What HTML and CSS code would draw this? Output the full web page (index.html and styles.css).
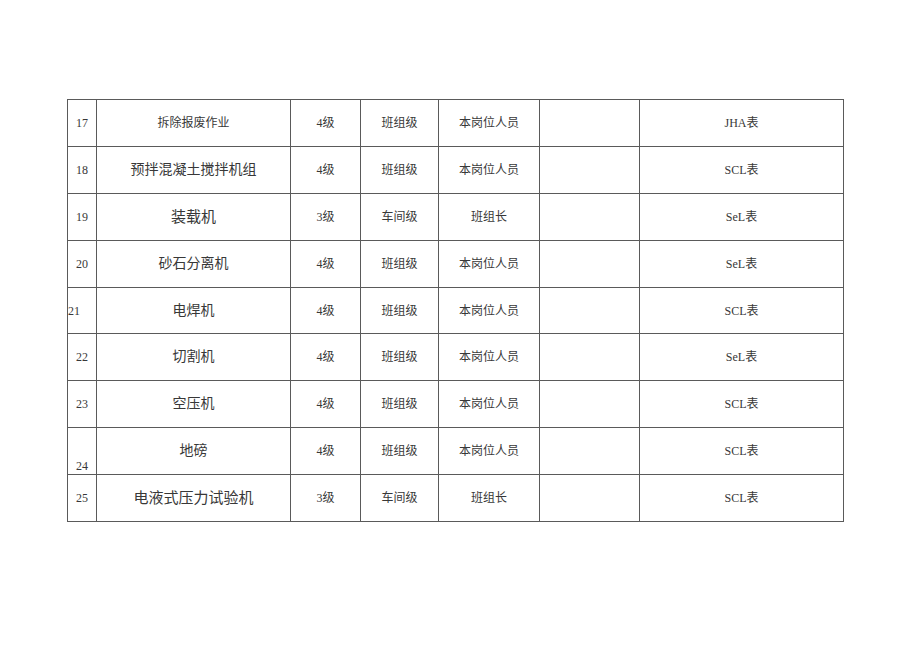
FILE: index.html
```html
<!DOCTYPE html>
<html lang="zh-CN">
<head>
<meta charset="utf-8">
<link rel="stylesheet" href="styles.css">
</head>
<body>
<table class="grid">
  <colgroup>
    <col class="c1"><col class="c2"><col class="c3"><col class="c4"><col class="c5"><col class="c6"><col class="c7">
  </colgroup>
  <tbody>
    <tr><td>17</td><td class="sm">拆除报废作业</td><td>4级</td><td>班组级</td><td>本岗位人员</td><td></td><td>JHA表</td></tr>
    <tr><td>18</td><td class="lg">预拌混凝土搅拌机组</td><td>4级</td><td>班组级</td><td>本岗位人员</td><td></td><td>SCL表</td></tr>
    <tr><td>19</td><td class="xl">装载机</td><td>3级</td><td>车间级</td><td>班组长</td><td></td><td>SeL表</td></tr>
    <tr><td>20</td><td class="md">砂石分离机</td><td>4级</td><td>班组级</td><td>本岗位人员</td><td></td><td>SeL表</td></tr>
    <tr class="short"><td class="left">21</td><td class="lg">电焊机</td><td>4级</td><td>班组级</td><td>本岗位人员</td><td></td><td>SCL表</td></tr>
    <tr><td>22</td><td class="lg">切割机</td><td>4级</td><td>班组级</td><td>本岗位人员</td><td></td><td>SeL表</td></tr>
    <tr><td>23</td><td class="lg">空压机</td><td>4级</td><td>班组级</td><td>本岗位人员</td><td></td><td>SCL表</td></tr>
    <tr><td class="bottom">24</td><td class="md">地磅</td><td>4级</td><td>班组级</td><td>本岗位人员</td><td></td><td>SCL表</td></tr>
    <tr><td>25</td><td class="xl">电液式压力试验机</td><td>3级</td><td>车间级</td><td>班组长</td><td></td><td>SCL表</td></tr>
  </tbody>
</table>
</body>
</html>
```
FILE: styles.css
```css
html, body {
  margin: 0;
  padding: 0;
  background: #ffffff;
}

body {
  font-family: "Liberation Serif", "Noto Sans CJK SC", serif;
  color: #383838;
}

.grid {
  border-collapse: collapse;
  table-layout: fixed;
  width: 776px;
  margin: 99px 0 0 67px;
}

.c1 { width: 29px; }
.c2 { width: 194px; }
.c3 { width: 70px; }
.c4 { width: 78px; }
.c5 { width: 101px; }
.c6 { width: 100px; }
.c7 { width: 204px; }

.grid tr {
  height: 47px;
}

.grid tr.short {
  height: 46px;
}

.grid td {
  border: 1px solid #5a5a5a;
  padding: 0;
  text-align: center;
  vertical-align: middle;
  font-size: 12px;
  line-height: 14px;
  white-space: nowrap;
}

.grid td.sm {
  font-size: 12px;
}

.grid td.md {
  font-size: 14px;
  line-height: 16px;
}

.grid td.lg {
  font-size: 14px;
  line-height: 16px;
}

.grid td.xl {
  font-size: 15px;
  line-height: 17px;
}

.grid td.left {
  text-align: left;
}

.grid td.bottom {
  vertical-align: bottom;
  padding-bottom: 1px;
}
```
